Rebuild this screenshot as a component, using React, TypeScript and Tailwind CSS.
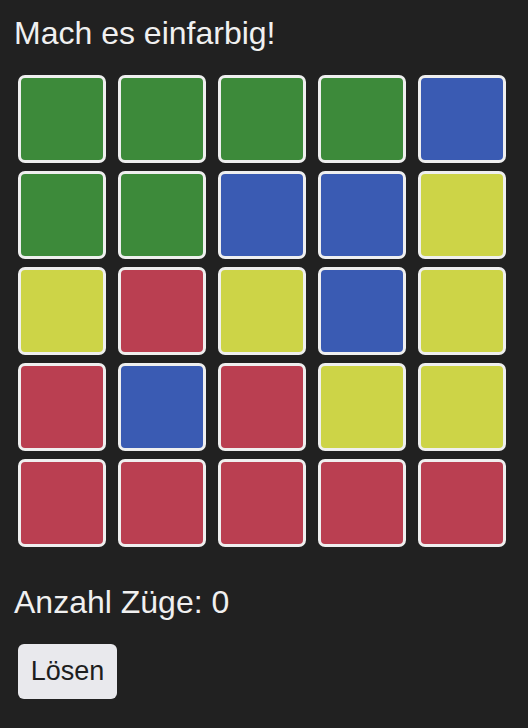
const colors: Record<string, string> = {
  g: 'bg-[#3d8a3a]',
  b: 'bg-[#3a5bb3]',
  y: 'bg-[#cdd447]',
  r: 'bg-[#ba3f51]',
};

const board = [
  ['g', 'g', 'g', 'g', 'b'],
  ['g', 'g', 'b', 'b', 'y'],
  ['y', 'r', 'y', 'b', 'y'],
  ['r', 'b', 'r', 'y', 'y'],
  ['r', 'r', 'r', 'r', 'r'],
];

export default function App() {
  return (
    <div className="min-h-screen bg-[#212121] pl-[14px] pt-[15px] text-[#f0f0f0] font-['Liberation_Sans',Arial,sans-serif]">
      <h1 className="text-[32px] leading-[37px]">Mach es einfarbig!</h1>
      <div className="ml-[4px] mt-[23px] grid w-[488px] grid-cols-5 gap-x-[12px] gap-y-[8px]">
        {board.flat().map((c, i) => (
          <button
            key={i}
            className={`h-[88px] w-[88px] rounded-[7px] border-[3px] border-[#efefef] ${colors[c]}`}
          />
        ))}
      </div>
      <p className="mt-[37px] text-[32px] leading-[37px]">Anzahl Züge: 0</p>
      <button className="ml-[4px] mt-[23px] h-[55px] w-[99px] rounded-[6px] bg-[#e9e9ed] text-[27px] text-[#1e1e1e]">
        Lösen
      </button>
    </div>
  );
}
